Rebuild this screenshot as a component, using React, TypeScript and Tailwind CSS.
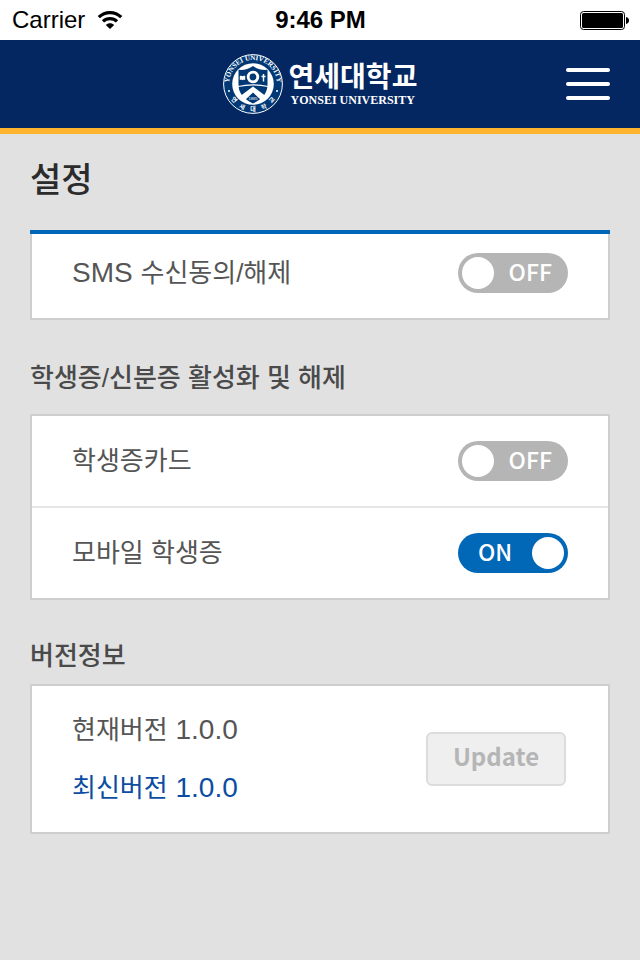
import { useState } from "react"

const SANS = "font-['Liberation_Sans','Noto_Sans_CJK_KR',sans-serif]"

function Wifi() {
  return (
    <svg width="26" height="20" viewBox="0 0 26 20" fill="none" stroke="black" strokeWidth="3.200" aria-hidden="true">
      <path d="M1.800 7.200C8 1 18 1 24.200 7.200" />
      <path d="M6 11.400c4-3.800 10-3.800 14 0" />
      <path d="M8.800 15c2.300-2.200 6.100-2.200 8.400 0L13 19z" fill="black" stroke="none" />
    </svg>
  )
}

function Battery() {
  return (
    <svg width="49" height="19" viewBox="0 0 49 19" aria-hidden="true">
      <rect x="0.5" y="0.5" width="44" height="18" rx="3" fill="white" stroke="black" />
      <rect x="2" y="2" width="41" height="15" rx="1.5" fill="black" />
      <path d="M46 6c2 .6 3 1.800 3 3.500s-1 2.900-3 3.500z" fill="black" />
    </svg>
  )
}

function Emblem() {
  return (
    <svg width="60" height="60" viewBox="0 0 60 60" aria-hidden="true">
      <defs>
        <path id="ring-top" d="M8.200 40A24 24 0 1 1 51.800 40" />
      </defs>
      <circle cx="30" cy="30" r="29.400" fill="#003876" stroke="white" strokeWidth="1" />
      <circle cx="30" cy="30" r="20.800" fill="white" />
      <text className="font-['Liberation_Serif',serif] text-[7px] font-bold" fill="white" textAnchor="middle">
        <textPath href="#ring-top" startOffset="50%">YONSEI UNIVERSITY</textPath>
      </text>
      <g className="font-['Noto_Sans_CJK_KR',sans-serif] text-[6px] font-bold" fill="white" textAnchor="middle">
        <text x="11" y="48" transform="rotate(47 11 46)">연</text>
        <text x="19" y="55" transform="rotate(24 19 53)">세</text>
        <text x="30" y="57">대</text>
        <text x="41" y="55" transform="rotate(-24 41 53)">학</text>
        <text x="49" y="48" transform="rotate(-47 49 46)">교</text>
      </g>
      <circle cx="6" cy="37" r="1" fill="white" />
      <circle cx="54" cy="37" r="1" fill="white" />
      <path d="M15.500 15.800c5 .5 10-.5 14.500-3.800 4.500 3.300 9.500 4.300 14.500 3.800v14.700c0 8.500-5 14.500-14.500 19-9.500-4.500-14.500-10.500-14.500-19z" fill="#003876" />
      <circle cx="30" cy="23" r="4.800" fill="#003876" stroke="white" strokeWidth="2.800" />
      <path d="M16.800 22c1.200-.5 2-.4 2.700.2.700-.6 1.500-.7 2.700-.2v4c-1.200-.4-2-.3-2.700.2-.7-.5-1.500-.6-2.700-.2z" fill="white" />
      <path d="M40.500 20v7.500M38.500 22.500h4" stroke="white" strokeWidth="1.400" />
      <path d="M15 32.500c9-2 21-2 30 0" fill="none" stroke="white" strokeWidth="1.200" />
      <path d="M16 43 30 32.500 44 43l-4.500 4.500L30 38.500l-9.500 9z" fill="white" />
      <text x="30" y="46" className="font-['Liberation_Sans',sans-serif] text-[4px]" fill="white" textAnchor="middle">1885</text>
    </svg>
  )
}

function Switch({ label, checked, onChange }: { label: string; checked: boolean; onChange: () => void }) {
  return (
    <span className="relative block h-10 w-[110px] shrink-0">
      <input
        type="checkbox"
        role="switch"
        aria-label={label}
        checked={checked}
        onChange={onChange}
        className="block h-10 w-[110px] cursor-pointer appearance-none rounded-full bg-[#b5b5b5] checked:bg-[#0068b7]"
      />
      <span
        aria-hidden="true"
        className={`pointer-events-none absolute inset-0 flex items-center justify-between font-['Noto_Sans_CJK_KR',sans-serif] text-[23px] font-medium leading-8 text-white ${checked ? "flex-row-reverse pl-5 pr-1" : "pl-1 pr-4"}`}
      >
        <span className="size-8 rounded-full bg-white" />
        <span className="pb-1">{checked ? "ON" : "OFF"}</span>
      </span>
    </span>
  )
}

export default function App() {
  const [sms, setSms] = useState(false)
  const [card, setCard] = useState(false)
  const [mobile, setMobile] = useState(true)

  return (
    <div className={`min-h-screen bg-[#e1e1e1] text-[26px] leading-10 text-[#555] ${SANS}`}>
      {/* Status bar */}
      <div className="grid h-10 grid-cols-3 items-center bg-white pl-3 pr-[11px] text-2xl text-black">
        <div className="flex items-center gap-3">
          Carrier
          <Wifi />
        </div>
        <div className="text-center font-bold">9:46 PM</div>
        <div className="flex justify-end">
          <Battery />
        </div>
      </div>

      <header className="grid grid-cols-[1fr_auto_1fr] items-center border-b-6 border-[#ffb42d] bg-[#042762] px-[30px] text-white">
        <a href="#" className="col-start-2 flex h-[88px] items-center gap-1.5">
          <Emblem />
          <span className="flex flex-col pt-1">
            <span className="text-[28px] font-bold leading-7">연세대학교</span>
            <span className="pl-0.5 font-['Liberation_Serif',serif] text-xs font-bold leading-4">YONSEI UNIVERSITY</span>
          </span>
        </a>
        <button type="button" aria-label="메뉴" className="flex w-11 cursor-pointer flex-col gap-2.5 justify-self-end">
          <span className="h-1 w-full rounded-full bg-white" />
          <span className="h-1 w-full rounded-full bg-white" />
          <span className="h-1 w-full rounded-full bg-white" />
        </button>
      </header>

      <main className="px-[30px]">
        <h1 className="pb-[26px] pt-[22px] text-[34px] font-medium leading-12 text-[#2b2b2b]">설정</h1>

        <section className="border-t-4 border-[#0068b7]">
          <div className="flex items-center justify-between border-x-2 border-b-2 border-[#cecece] bg-white px-10 pb-[25px] pt-[19px]">
            <span>
              <span className="text-[28px] leading-none">SMS </span>수신동의/해제
            </span>
            <Switch label="SMS 수신동의/해제" checked={sms} onChange={() => setSms(!sms)} />
          </div>
        </section>

        <h2 className="pb-4 pt-[38px] font-medium text-[#4a4a4a]">학생증/신분증 활성화 및 해제</h2>
        <section className="divide-y-2 divide-[#e6e6e6] border-2 border-[#cecece] bg-white">
          <div className="flex items-center justify-between px-10 py-[25px]">
            학생증카드
            <Switch label="학생증카드" checked={card} onChange={() => setCard(!card)} />
          </div>
          <div className="flex items-center justify-between px-10 py-[25px]">
            모바일 학생증
            <Switch label="모바일 학생증" checked={mobile} onChange={() => setMobile(!mobile)} />
          </div>
        </section>

        <h2 className="pb-2 pt-9 font-medium text-[#4a4a4a]">버전정보</h2>
        <section className="flex items-center justify-between border-2 border-[#cecece] bg-white px-10 py-6">
          <div className="flex flex-col gap-[18px]">
            <p>
              현재버전<span className="text-[28px] leading-none"> 1.0.0</span>
            </p>
            <p className="text-[#0b4da2]">
              최신버전<span className="text-[28px] leading-none"> 1.0.0</span>
            </p>
          </div>
          <button
            type="button"
            disabled
            className="mr-0.5 h-[54px] w-[140px] rounded-md border-2 border-[#dcdcdc] bg-[#efefef] pb-1.5 font-['Noto_Sans_CJK_KR',sans-serif] text-2xl font-bold text-[#b5b5b5]"
          >
            Update
          </button>
        </section>
      </main>
    </div>
  )
}
